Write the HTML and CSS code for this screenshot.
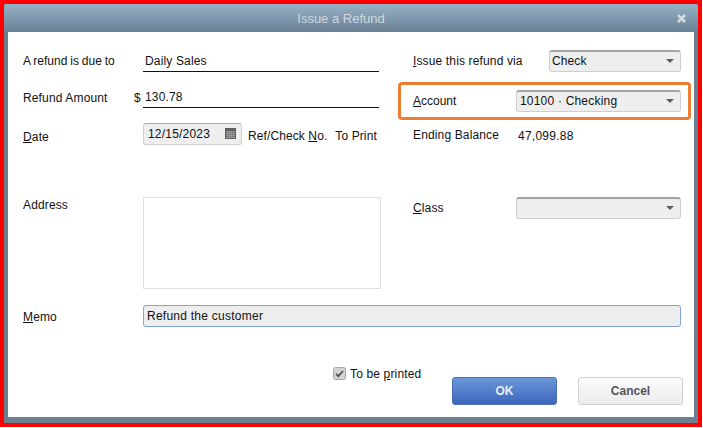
FILE: index.html
```html
<!DOCTYPE html>
<html lang="en">
<head>
<meta charset="utf-8">
<title>Issue a Refund</title>
<link rel="stylesheet" href="styles.css">
</head>
<body>
<div class="frame">
  <div class="window">
    <header class="titlebar">
      <span class="title">Issue a Refund</span>
      <svg class="close" width="11" height="11" viewBox="0 0 11 11" aria-hidden="true"><path d="M2 2l7 7M9 2l-7 7" stroke="#d5dde3" stroke-width="2.6" fill="none"/></svg>
    </header>
    <main class="content">
      <div class="columns">
        <section class="left">
          <div class="row row-due">
            <span class="label label-due">A refund is due to</span>
            <span class="line-value">Daily Sales</span>
          </div>
          <div class="row row-amount">
            <span class="label label-amount">Refund Amount</span>
            <span class="dollar">$</span>
            <span class="line-value line-amount">130.78</span>
          </div>
          <div class="row row-date">
            <span class="label label-date"><u>D</u>ate</span>
            <span class="date-field">12/15/2023
              <svg class="cal" width="11" height="11" viewBox="0 0 11 11" aria-hidden="true"><rect width="11" height="11" fill="#5f5f5f"/><path d="M1 3.5h9M1 5.5h9M1 7.5h9M1 9.5h9M2.5 3v7M4.5 3v7M6.5 3v7M8.5 3v7" stroke="#9a9a9a" stroke-width="1" fill="none"/></svg>
            </span>
            <span class="ref">Ref/Check <u>N</u>o.</span>
            <span class="toprint">To Print</span>
          </div>
          <div class="row row-address">
            <span class="label label-address">Address</span>
            <div class="address-box"></div>
          </div>
        </section>
        <section class="right">
          <div class="row row-via">
            <span class="label label-via"><u>I</u>ssue this refund via</span>
            <div class="select select-via">Check<i class="arrow"></i></div>
          </div>
          <div class="row row-account">
            <span class="label label-right label-account"><u>A</u>ccount</span>
            <div class="select select-wide">10100 · Checking<i class="arrow"></i></div>
            <div class="callout"></div>
          </div>
          <div class="row row-ending">
            <span class="label label-right">Ending Balance</span>
            <span class="balance">47,099.88</span>
          </div>
          <div class="row row-class">
            <span class="label label-right"><u>C</u>lass</span>
            <div class="select select-wide"><i class="arrow"></i></div>
          </div>
        </section>
      </div>
      <div class="row row-memo">
        <span class="label label-memo"><u>M</u>emo</span>
        <div class="memo">Refund the customer</div>
      </div>
      <div class="footer">
        <label class="check">
          <svg width="13" height="13" viewBox="0 0 13 13" aria-hidden="true"><rect x=".5" y=".5" width="12" height="12" rx="2" fill="#d4d4d4" stroke="#a6a6a6"/><path d="M3 6.8l2.4 2.4L10 4" stroke="#555" stroke-width="1.8" fill="none"/></svg>
          <span>To be <u>p</u>rinted</span>
        </label>
        <button class="btn btn-ok" type="button">OK</button>
        <button class="btn btn-cancel" type="button">Cancel</button>
      </div>
    </main>
  </div>
</div>
</body>
</html>
```
FILE: styles.css
```css
* { box-sizing: border-box; }
html, body { margin: 0; padding: 0; background: #fff; }
body {
  font-family: "Liberation Sans", Arial, sans-serif;
  font-size: 12px;
  color: #111;
  width: 703px;
  height: 428px;
  overflow: hidden;
}
.frame {
  width: 702px;
  height: 427px;
  border: 4px solid #fe0000;
}
.window {
  height: 100%;
  display: flex;
  flex-direction: column;
  background: #6b7f90;
  padding: 0 4px 6px;
}
.titlebar {
  flex: 0 0 28px;
  margin: 0 -4px;
  padding: 0 11px 0 0;
  display: flex;
  align-items: center;
  background: linear-gradient(#97b1c7, #6a8195);
  border-radius: 3px 3px 0 0;
}
.title {
  flex: 1;
  text-align: center;
  padding-left: 2px;
  color: #cfd8df;
  font-size: 13px;
}
.close { flex: none; }
.content {
  flex: 1;
  background: #fff;
  padding: 18px 12px 0 15px;
  display: flex;
  flex-direction: column;
}
.columns { display: flex; }
.left { width: 356px; display: flex; flex-direction: column; }
.right { width: 268px; margin-left: 34px; display: flex; flex-direction: column; }
.row { display: flex; align-items: center; }
.label { flex: none; letter-spacing: .14px; white-space: nowrap; }
u { text-underline-offset: 1px; }

.row-due { height: 22px; }
.label-due { width: 120px; letter-spacing: 0; word-spacing: -.4px; }
.line-value {
  flex: 1;
  height: 22px;
  line-height: 22px;
  padding-left: 2px;
  border-bottom: 1px solid #111;
  letter-spacing: .15px;
}
.row-amount { height: 22px; margin-top: 14px; }
.label-amount { width: 111px; padding-top: 2px; }
.dollar { width: 9px; padding-top: 2px; }
.line-amount { line-height: 22px; }

.row-date { height: 22px; margin-top: 15px; }
.label-date { width: 120px; padding-top: 5px; }
.date-field {
  flex: none;
  width: 99px;
  height: 22px;
  padding: 0 5px 1px 4px;
  display: flex;
  align-items: center;
  justify-content: space-between;
  background: #eee;
  border: 1px solid #cfcfcf;
  border-top-color: #a9a9a9;
  border-radius: 3px;
  letter-spacing: .2px;
}
.ref { margin-left: 6px; padding-top: 4px; white-space: nowrap; letter-spacing: .1px; }
.toprint { margin-left: 8px; padding-top: 4px; white-space: nowrap; letter-spacing: .1px; }

.row-address { margin-top: 52px; align-items: flex-start; }
.label-address { width: 120px; padding-top: 1px; }
.address-box {
  flex: none;
  width: 238px;
  height: 92px;
  border: 1px solid #e0e0e0;
}

.row-via { height: 22px; }
.label-via { width: 136px; }
.select {
  position: relative;
  flex: none;
  height: 22px;
  line-height: 18px;
  padding-left: 3px;
  background: #eee;
  border: 1px solid #cfcfcf;
  border-top: 2px solid #a3a3a3;
  border-radius: 3px;
  letter-spacing: .2px;
}
.select-via { width: 132px; padding-left: 2px; letter-spacing: .1px; }
.select-wide { width: 165px; }
.arrow {
  position: absolute;
  right: 6px;
  top: 7px;
  width: 0;
  height: 0;
  border-left: 4.5px solid transparent;
  border-right: 4.5px solid transparent;
  border-top: 4px solid #5c5c5c;
}
.row-account { height: 22px; margin-top: 18px; position: relative; }
.label-right { width: 103px; }
.label-account { letter-spacing: 0; }
.callout {
  position: absolute;
  left: -15px;
  right: -10px;
  top: -8px;
  bottom: -8px;
  border: 3px solid #ed7d31;
  border-radius: 4px;
  pointer-events: none;
}
.row-ending { height: 22px; margin-top: 12px; }
.balance { margin-left: 2px; padding-top: 1px; letter-spacing: .25px; }
.row-class { height: 22px; margin-top: 51px; }

.row-memo { margin-top: 16px; height: 22px; }
.label-memo { width: 120px; padding-top: 2px; }
.memo {
  width: 538px;
  height: 22px;
  line-height: 20px;
  padding-left: 3px;
  background: #eee;
  border: 1px solid #7fa3dc;
  border-radius: 3px;
  letter-spacing: .25px;
}

.footer {
  margin-top: 40px;
  display: flex;
  align-items: flex-start;
  padding-left: 310px;
}
.check {
  display: flex;
  flex: none;
  align-items: center;
  gap: 4px;
  width: 119px;
  height: 13px;
  letter-spacing: .15px;
  white-space: nowrap;
}
.btn {
  flex: none;
  width: 105px;
  height: 28px;
  margin-top: 10px;
  border-radius: 3px;
  font: bold 12px "Liberation Sans", Arial, sans-serif;
}
.btn-ok {
  color: #e6edf7;
  background: linear-gradient(#6a98d9, #3c66bd);
  border: 1px solid #4a70b0;
}
.btn-cancel {
  margin-left: 21px;
  color: #555;
  background: linear-gradient(#fbfbfb, #ececec);
  border: 1px solid #cfcfcf;
}
```
